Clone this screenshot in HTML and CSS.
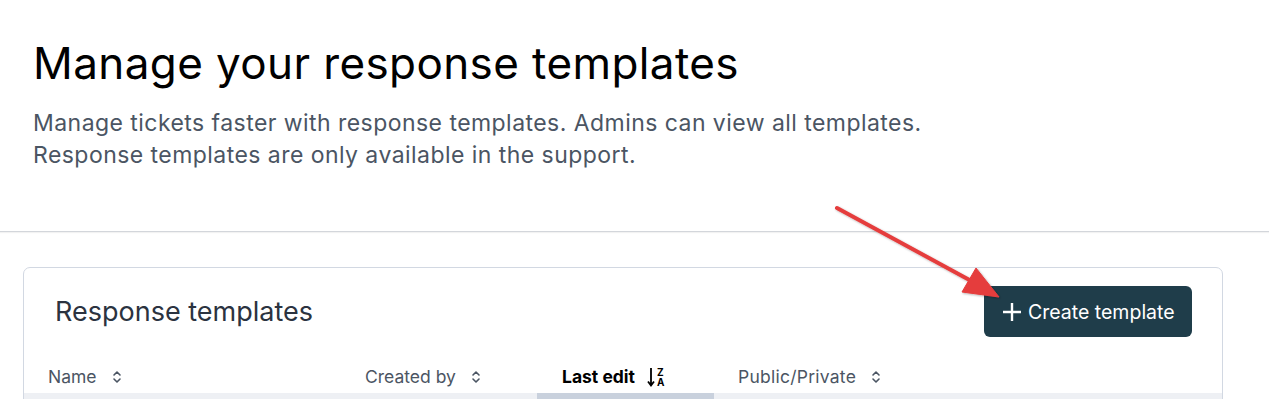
FILE: index.html
```html
<!DOCTYPE html>
<html lang="en">
<head>
<meta charset="utf-8">
<title>Manage your response templates</title>
<link rel="stylesheet" href="styles.css">
</head>
<body>
<header class="page-header">
  <h1 class="page-title">Manage your response templates</h1>
  <p class="page-desc">Manage tickets faster with response templates. Admins can view all templates.<br>Response templates are only available in the support.</p>
</header>
<main class="content">
  <section class="card">
    <div class="card-head">
      <h2 class="card-title">Response templates</h2>
      <button class="btn-primary" type="button">
        <svg class="btn-icon" viewBox="0 0 18 18" width="18" height="18" aria-hidden="true"><path d="M9 0v18M0 9h18" stroke="currentColor" stroke-width="2.4" fill="none"/></svg>
        <span>Create template</span>
      </button>
    </div>
    <div class="table-head">
      <div class="th th-name">Name <svg class="sort" viewBox="0 0 10 14" width="10" height="14"><path d="M2 5l3-3 3 3M2 9l3 3 3-3" stroke="currentColor" stroke-width="1.6" fill="none" stroke-linecap="round" stroke-linejoin="round"/></svg></div>
      <div class="th th-created">Created by <svg class="sort" viewBox="0 0 10 14" width="10" height="14"><path d="M2 5l3-3 3 3M2 9l3 3 3-3" stroke="currentColor" stroke-width="1.6" fill="none" stroke-linecap="round" stroke-linejoin="round"/></svg></div>
      <div class="th th-edit active">Last edit <span class="sort-za"><svg viewBox="0 0 8 22" width="8" height="22"><path d="M4 2v17M1 15.5l3 4 3-4" stroke="currentColor" stroke-width="1.8" fill="none"/></svg><span class="za"><span>Z</span><span>A</span></span></span></div>
      <div class="th th-public">Public/Private <svg class="sort" viewBox="0 0 10 14" width="10" height="14"><path d="M2 5l3-3 3 3M2 9l3 3 3-3" stroke="currentColor" stroke-width="1.6" fill="none" stroke-linecap="round" stroke-linejoin="round"/></svg></div>
      <div class="th th-rest"></div>
    </div>
    <div class="table-row">
      <div class="cell c-name"></div>
      <div class="cell c-created"></div>
      <div class="cell c-edit"></div>
      <div class="cell c-public"></div>
      <div class="cell c-rest"></div>
    </div>
  </section>
</main>
<svg class="annotation-arrow" viewBox="0 0 200 110" width="200" height="110" aria-hidden="true">
  <defs>
    <filter id="sh" x="-10%" y="-10%" width="130%" height="130%"><feDropShadow dx="1" dy="1" stdDeviation="1" flood-color="#000" flood-opacity="0.3"/></filter>
  </defs>
  <g filter="url(#sh)" fill="#e53d3d" stroke="#e53d3d">
    <line x1="17" y1="8" x2="155" y2="83" stroke-width="4" stroke-linecap="round"/>
    <polygon points="179,97 142,92 156,68" stroke-width="1"/>
  </g>
</svg>
</body>
</html>
```

FILE: styles.css
```css
* { box-sizing: border-box; }
html, body { margin: 0; padding: 0; background: #fff; }
body {
  font-family: Inter, "Noto Sans", Arial, sans-serif;
  color: #1f2733;
  width: 1269px;
  height: 399px;
  overflow: hidden;
  position: relative;
}
.page-header {
  padding: 35px 33px 0;
  height: 232px;
  border-bottom: 1px solid #d3d6db;
  box-shadow: 0 1px 1px rgba(0, 0, 0, 0.05);
}
.page-title {
  margin: 0;
  font-size: 44px;
  font-weight: 400;
  line-height: 56px;
  color: #000;
  letter-spacing: 0.4px;
}
.page-desc {
  margin: 16px 0 0;
  font-size: 23px;
  line-height: 32px;
  letter-spacing: 0.45px;
  color: #4b5563;
}
.content {
  padding: 35px 46px 0 23px;
}
.card {
  border: 1px solid #d2d8e2;
  border-radius: 7px;
  background: #fff;
}
.card-head {
  display: flex;
  align-items: center;
  justify-content: space-between;
  padding: 18px 30px 0 31px;
}
.card-title {
  margin: 0;
  font-size: 27px;
  font-weight: 400;
  color: #2b3340;
}
.btn-primary {
  display: flex;
  align-items: center;
  gap: 7px;
  height: 51px;
  width: 208px;
  padding: 0 0 0 19px;
  background: #1f3d4a;
  color: #fff;
  border: 0;
  border-radius: 6px;
  font-family: inherit;
  font-size: 19.5px;
  white-space: nowrap;
}
.btn-icon { width: 18px; height: 18px; flex: none; }
.table-head {
  display: grid;
  grid-template-columns: 317px 196px 177px 200px 1fr;
  height: 56px;
  align-items: end;
  padding-bottom: 5px;
}
.th {
  display: flex;
  align-items: center;
  gap: 15px;
  font-size: 17.5px;
  line-height: 22px;
  color: #4b5563;
}
.th-name { padding-left: 24px; }
.th-created { padding-left: 24px; }
.th-edit { padding-left: 25px; font-weight: 700; color: #000; gap: 12px; }
.th-public { padding-left: 24px; letter-spacing: 0.25px; }
.sort { color: #4b5563; }
.sort-za { display: flex; align-items: center; gap: 2px; color: #000; }
.za {
  display: flex;
  flex-direction: column;
  font-size: 10px;
  line-height: 10px;
  font-weight: 700;
}
.table-row {
  display: grid;
  grid-template-columns: 317px 196px 177px 200px 1fr;
  height: 40px;
}
.cell { background: #eef0f4; }
.c-edit { background: #c9d1dd; }
.annotation-arrow {
  position: absolute;
  left: 820px;
  top: 200px;
  pointer-events: none;
}
```
